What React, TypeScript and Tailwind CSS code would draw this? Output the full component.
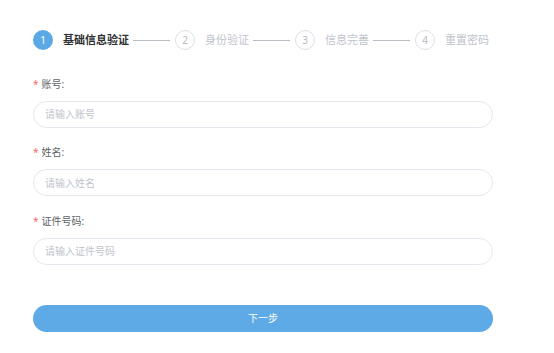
import React from "react";

const steps = ["基础信息验证", "身份验证", "信息完善", "重置密码"];

const fields = [
  { label: "账号:", placeholder: "请输入账号" },
  { label: "姓名:", placeholder: "请输入姓名" },
  { label: "证件号码:", placeholder: "请输入证件号码" },
];

export default function App() {
  return (
    <div
      className="w-[554px] h-[353px] bg-white pl-[33px] pt-[30px]"
      style={{ fontFamily: '"Noto Sans", "Noto Sans CJK SC", sans-serif' }}
    >
      {/* Steps */}
      <div className="flex items-center h-5">
        {steps.map((s, i) => (
          <div key={i} className="flex items-center">
            {i > 0 && <div className="w-[37px] h-px bg-[#b9bcc2] ml-[4px] mr-[5px]" />}
            {i === 0 ? (
              <div className="w-5 h-5 rounded-full bg-[#5aa8e5] text-white text-[10px] flex items-center justify-center">
                {i + 1}
              </div>
            ) : (
              <div className="w-5 h-5 rounded-full border border-[#dcdfe6] text-[#b7bbc2] text-[10px] flex items-center justify-center">
                {i + 1}
              </div>
            )}
            <span
              className={
                i === 0
                  ? "ml-[10px] text-[11px] font-bold text-[#303133] leading-5"
                  : "ml-[10px] text-[11px] text-[#c0c4cc] leading-5"
              }
            >
              {s}
            </span>
          </div>
        ))}
      </div>

      {/* Form */}
      <div className="w-[460px] mt-[24px]">
        {fields.map((f, i) => (
          <div key={i} className="mb-[15px]">
            <div className="h-5 flex items-center mb-[6px] text-[10px] text-[#606266]">
              <span className="text-[#f56c6c] mr-[3px]">*</span>
              {f.label}
            </div>
            <input
              className="w-full h-[27px] rounded-full border border-[#e4e7ed] px-[11px] text-[10px] outline-none placeholder:text-[#c0c4cc]"
              placeholder={f.placeholder}
            />
          </div>
        ))}
        <button className="mt-[25px] w-full h-[27px] rounded-full bg-[#5eaae6] text-white text-[10px]">
          下一步
        </button>
      </div>
    </div>
  );
}
